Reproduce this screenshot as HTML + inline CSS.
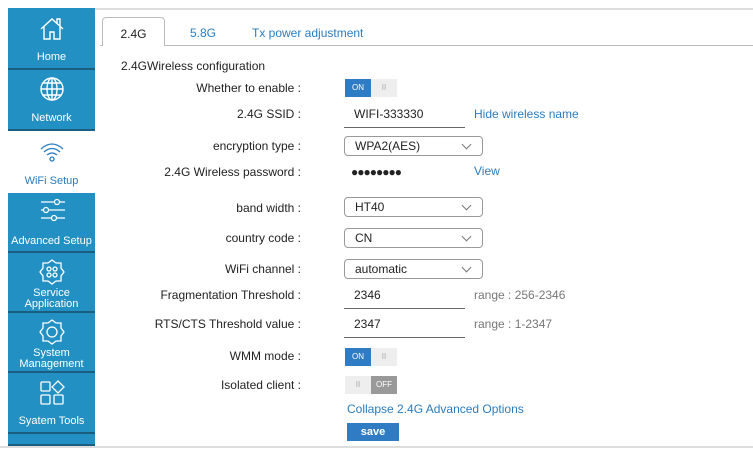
<!DOCTYPE html>
<html><head><style>
*{margin:0;padding:0;box-sizing:border-box}
body{width:753px;height:453px;background:#fff;font-family:"Liberation Sans",sans-serif;font-size:12px;color:#222;position:relative;overflow:hidden}
.a{position:absolute}
.nav{position:absolute;left:8px;width:87px;background:#2390c3;color:#fff;text-align:center;font-size:11px;border-bottom:2px solid #1a5f80}
.nav svg{position:absolute;left:50%;transform:translateX(-50%)}
.lbl{position:absolute;right:452px;text-align:right;white-space:nowrap}
.sel{position:absolute;left:344px;width:139px;height:20px;border:1px solid #999;border-radius:4px;padding:2px 0 0 10px}
.sel:after{content:"";position:absolute;right:12px;top:4px;width:6px;height:6px;border-right:1px solid #777;border-bottom:1px solid #777;transform:rotate(45deg)}
.inp{position:absolute;left:344px;width:121px;border-bottom:1.5px solid #666;padding:0 0 6px 10px}
.tg{position:absolute;left:345px;width:52px;height:18px;background:#eee;font-size:8px}
.tg span{position:absolute;top:0;width:26px;height:18px;line-height:18px;text-align:center;color:#fff}
.blue{color:#2a7cc0}
.gray{color:#777}
</style></head><body>
<div class="nav" style="top:8px;height:62px"><svg width="26" height="26" viewBox="0 0 26 26" style="top:8px" fill="none" stroke="#fff" stroke-width="1.4"><path d="M2 13 13 3 24 13M5 11v12h6v-7h4v7h6V11M18 7V3h3v7"/></svg><div class="a" style="top:43px;width:100%">Home</div></div>
<div class="nav" style="top:70px;height:61px"><svg width="26" height="26" viewBox="0 0 26 26" style="top:6px" fill="none" stroke="#fff" stroke-width="1.4"><circle cx="13" cy="13" r="11"/><ellipse cx="13" cy="13" rx="5" ry="11"/><path d="M2 13h22M4 7h18M4 19h18M13 2v22"/></svg><div class="a" style="top:42px;width:100%">Network</div></div>
<div class="a" style="top:131px;left:8px;width:87px;height:62px;text-align:center;color:#2a7cc0;font-size:11px"><svg class="a" style="left:32px;top:10px" width="24" height="22" viewBox="0 0 24 22" fill="none" stroke="#2a7cc0" stroke-width="1.3"><path d="M1 8Q12-2 23 8M4 11Q12 4 20 11M7 14Q12 10 17 14"/><circle cx="12" cy="18" r="2"/></svg><div class="a" style="top:44px;width:100%">WiFi Setup</div></div>
<div class="nav" style="top:193px;height:60px"><svg width="26" height="24" viewBox="0 0 26 24" style="top:5px" fill="none" stroke="#fff" stroke-width="1.3"><path d="M2 4h24M2 12h24M2 20h24"/><circle cx="18" cy="4" r="2.5" fill="#2390c3"/><circle cx="7" cy="12" r="2.5" fill="#2390c3"/><circle cx="15" cy="20" r="2.5" fill="#2390c3"/></svg><div class="a" style="top:42px;width:100%">Advanced Setup</div></div>
<div class="nav" style="top:253px;height:60px"><svg width="26" height="26" viewBox="0 0 26 26" style="top:6px" fill="none" stroke="#fff" stroke-width="1.3"><path d="M13 1l4 3h5v5l3 4-3 4v5h-5l-4 3-4-3H4v-5l-3-4 3-4V4h5z"/><rect x="8" y="8" width="4" height="4" rx="2"/><rect x="14" y="8" width="4" height="4" rx="2"/><rect x="8" y="14" width="4" height="4" rx="2"/><rect x="14" y="14" width="4" height="4" rx="2"/></svg><div class="a" style="top:35px;width:100%;line-height:11px">Service<br>Application</div></div>
<div class="nav" style="top:313px;height:60px"><svg width="26" height="26" viewBox="0 0 26 26" style="top:6px" fill="none" stroke="#fff" stroke-width="1.3"><path d="M13 1l4 3h5v5l3 4-3 4v5h-5l-4 3-4-3H4v-5l-3-4 3-4V4h5z"/><circle cx="13" cy="13" r="5"/></svg><div class="a" style="top:35px;width:100%;line-height:11px">System<br>Management</div></div>
<div class="nav" style="top:373px;height:61px"><svg width="26" height="26" viewBox="0 0 26 26" style="top:7px" fill="none" stroke="#fff" stroke-width="1.3"><rect x="2" y="2" width="9" height="9" rx="1"/><path d="M19 1l6 6-6 6-6-6z"/><rect x="2" y="15" width="9" height="9" rx="1"/><rect x="15" y="15" width="9" height="9" rx="1"/></svg><div class="a" style="top:42px;width:100%">Syatem Tools</div></div>
<div class="nav" style="top:434px;height:12px"></div>
<div class="a" style="left:95px;top:8px;width:658px;height:2px;background:#ddd"></div>
<div class="a" style="left:0;top:446px;width:753px;height:2px;background:#ddd"></div>
<div class="a" style="left:100px;top:45px;width:653px;height:1px;background:#bbb"></div>
<div class="a" style="left:102px;top:17px;width:63px;height:29px;border:1px solid #bbb;border-bottom:none;border-radius:4px 4px 0 0;background:#fff;text-align:center;padding-top:9px">2.4G</div>
<div class="a blue" style="left:190px;top:26px">5.8G</div>
<div class="a blue" style="left:252px;top:26px">Tx power adjustment</div>
<div class="a" style="left:121px;top:59px">2.4GWireless configuration</div>
<div class="lbl" style="top:81px">Whether to enable :</div>
<div class="tg" style="top:79px"><span style="left:0;background:#2f7cc4">ON</span><span style="left:26px;color:#aaa">II</span></div>
<div class="lbl" style="top:107px">2.4G SSID :</div>
<div class="inp" style="top:107px">WIFI-333330</div>
<div class="a blue" style="left:474px;top:107px">Hide wireless name</div>
<div class="lbl" style="top:139px">encryption type :</div>
<div class="sel" style="top:136px">WPA2(AES)</div>
<div class="lbl" style="top:165px">2.4G Wireless password :</div>
<div class="a" style="left:351px;top:165px;letter-spacing:-1px">●●●●●●●●</div>
<div class="a blue" style="left:474px;top:164px">View</div>
<div class="lbl" style="top:201px">band width :</div>
<div class="sel" style="top:197px">HT40</div>
<div class="lbl" style="top:231px">country code :</div>
<div class="sel" style="top:228px">CN</div>
<div class="lbl" style="top:262px">WiFi channel :</div>
<div class="sel" style="top:259px">automatic</div>
<div class="lbl" style="top:288px">Fragmentation Threshold :</div>
<div class="inp" style="top:288px">2346</div>
<div class="a gray" style="left:474px;top:288px">range : 256-2346</div>
<div class="lbl" style="top:317px">RTS/CTS Threshold value :</div>
<div class="inp" style="top:317px">2347</div>
<div class="a gray" style="left:474px;top:317px">range : 1-2347</div>
<div class="lbl" style="top:349px">WMM mode :</div>
<div class="tg" style="top:348px"><span style="left:0;background:#2f7cc4">ON</span><span style="left:26px;color:#aaa">II</span></div>
<div class="lbl" style="top:378px">Isolated client :</div>
<div class="tg" style="top:376px"><span style="left:0;color:#aaa">II</span><span style="left:26px;background:#999">OFF</span></div>
<div class="a blue" style="left:347px;top:402px">Collapse 2.4G Advanced Options</div>
<div class="a" style="left:347px;top:423px;width:52px;height:18px;background:#2f7cc4;color:#fff;font-weight:bold;font-size:11px;text-align:center;line-height:18px">save</div>
</body></html>
